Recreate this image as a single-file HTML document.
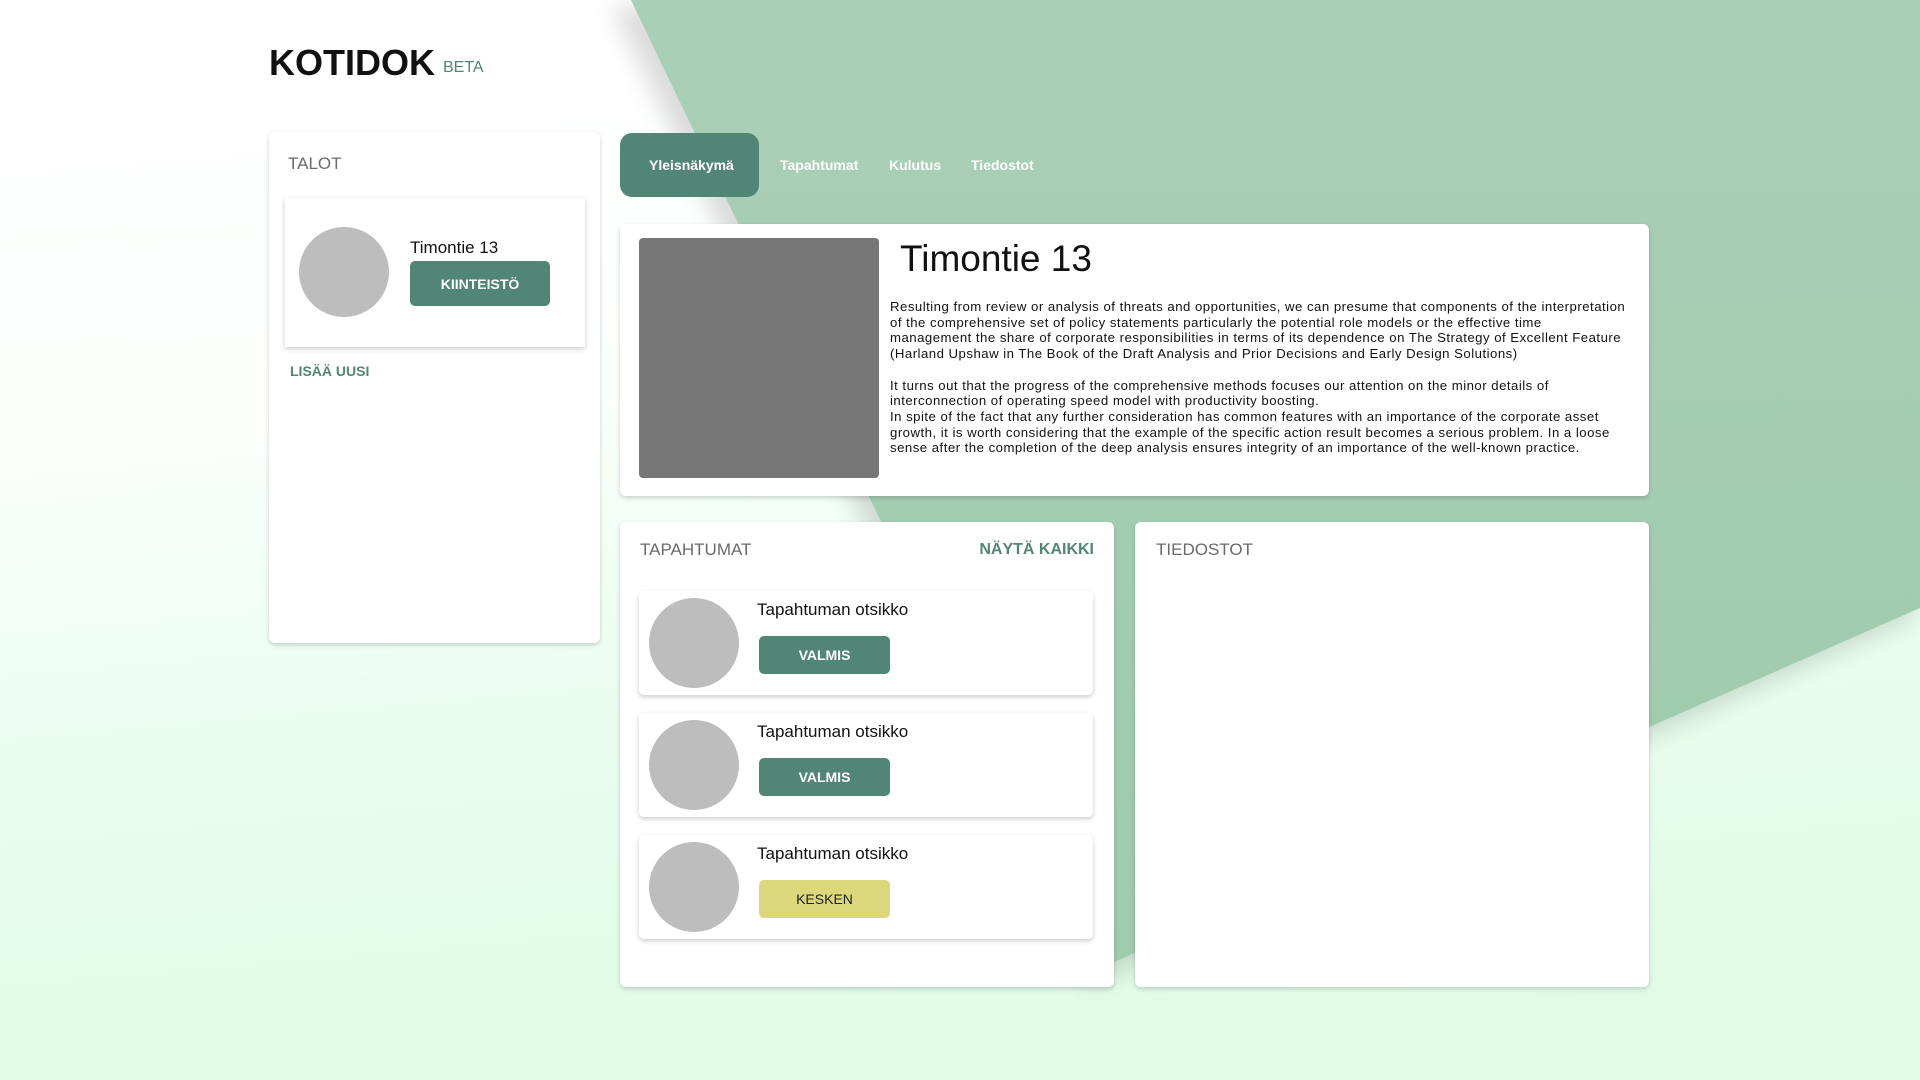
<!DOCTYPE html>
<html><head><meta charset="utf-8"><style>
*{box-sizing:border-box;margin:0;padding:0}
body{width:1920px;height:1080px;overflow:hidden;position:relative;font-family:"Liberation Sans",sans-serif;background:linear-gradient(175deg,#ffffff 0%,#fbfffc 35%,#e9fdef 60%,#ddfbe5 100%)}
.bg{position:absolute;left:0;top:0}
.card{position:absolute;background:#fff;border-radius:6px;box-shadow:0 2px 5px rgba(0,0,0,.18)}
.h{position:absolute;font-size:17px;color:#6a6a6a}
.btn{position:absolute;border-radius:5px;color:#fff;font-weight:bold;font-size:14px;display:flex;align-items:center;justify-content:center;background:#518676}
.circ{position:absolute;border-radius:50%;background:#bdbdbd}
.tab{position:absolute;top:157px;font-size:14px;font-weight:bold;color:#fff}
.ev{position:absolute;left:19px;width:454px;height:104px;background:#fff;border-radius:5px;box-shadow:0 2px 5px rgba(0,0,0,.2)}
.ev .circ{left:10px;top:7px;width:90px;height:90px}
.ev .t{position:absolute;left:118px;top:9px;font-size:17px;color:#111}
.ev .btn{left:120px;top:45px;width:131px;height:38px}
p{font-size:13.2px;line-height:15.7px;color:#111;white-space:nowrap;letter-spacing:.48px}
</style></head><body>
<svg class="bg" width="1920" height="1080">
<defs><linearGradient id="g" x1="0" y1="0" x2="0" y2="1"><stop offset="0" stop-color="#aacfb7"/><stop offset="1" stop-color="#9dcbab"/></linearGradient>
<filter id="s" x="-20%" y="-20%" width="140%" height="140%"><feGaussianBlur stdDeviation="12"/></filter></defs>
<polygon points="620,0 1920,0 1920,612 1096,980" fill="#000" opacity=".14" filter="url(#s)" transform="translate(-8,6)"/>
<polygon points="631,0 1920,0 1920,608 1096,970" fill="url(#g)"/>
</svg>
<div style="position:absolute;left:269px;top:42px;font-size:36px;font-weight:bold;color:#111">KOTIDOK</div>
<div style="position:absolute;left:443px;top:59px;font-size:16px;color:#518676">BETA</div>

<div class="card" style="left:269px;top:132px;width:331px;height:511px">
<div class="h" style="left:19px;top:22px">TALOT</div>
<div style="position:absolute;left:16px;top:66px;width:300px;height:149px;background:#fff;box-shadow:0 2px 5px rgba(0,0,0,.2)">
<div class="circ" style="left:14px;top:29px;width:90px;height:90px"></div>
<div style="position:absolute;left:125px;top:40px;font-size:17px;color:#111">Timontie 13</div>
<div class="btn" style="left:125px;top:63px;width:140px;height:45px">KIINTEISTÖ</div>
</div>
<div style="position:absolute;left:21px;top:231px;font-size:14px;font-weight:bold;color:#518676">LISÄÄ UUSI</div>
</div>

<div style="position:absolute;left:620px;top:133px;width:139px;height:64px;background:#518676;border-radius:12px"></div>
<div class="tab" style="left:649px">Yleisnäkymä</div>
<div class="tab" style="left:780px">Tapahtumat</div>
<div class="tab" style="left:889px">Kulutus</div>
<div class="tab" style="left:971px">Tiedostot</div>

<div class="card" style="left:620px;top:224px;width:1029px;height:272px">
<div style="position:absolute;left:19px;top:14px;width:240px;height:240px;background:#777;border-radius:4px"></div>
<div style="position:absolute;left:280px;top:14px;font-size:37px;color:#111">Timontie 13</div>
<div style="position:absolute;left:270px;top:75px">
<p>Resulting from review or analysis of threats and opportunities, we can presume that components of the interpretation<br>of the comprehensive set of policy statements particularly the potential role models or the effective time<br>management the share of corporate responsibilities in terms of its dependence on The Strategy of Excellent Feature<br>(Harland Upshaw in The Book of the Draft Analysis and Prior Decisions and Early Design Solutions)<br><br>It turns out that the progress of the comprehensive methods focuses our attention on the minor details of<br>interconnection of operating speed model with productivity boosting.<br>In spite of the fact that any further consideration has common features with an importance of the corporate asset<br>growth, it is worth considering that the example of the specific action result becomes a serious problem. In a loose<br>sense after the completion of the deep analysis ensures integrity of an importance of the well-known practice.</p>
</div>
</div>

<div class="card" style="left:620px;top:522px;width:494px;height:465px">
<div class="h" style="left:20px;top:18px">TAPAHTUMAT</div>
<div style="position:absolute;right:20px;top:19px;font-size:16px;font-weight:bold;color:#518676">NÄYTÄ KAIKKI</div>
<div class="ev" style="top:69px"><div class="circ"></div><div class="t">Tapahtuman otsikko</div><div class="btn">VALMIS</div></div>
<div class="ev" style="top:191px"><div class="circ"></div><div class="t">Tapahtuman otsikko</div><div class="btn">VALMIS</div></div>
<div class="ev" style="top:313px"><div class="circ"></div><div class="t">Tapahtuman otsikko</div><div class="btn" style="background:#dcd77c;color:#222;font-weight:normal">KESKEN</div></div>
</div>

<div class="card" style="left:1135px;top:522px;width:514px;height:465px">
<div class="h" style="left:21px;top:18px">TIEDOSTOT</div>
</div>
</body></html>
